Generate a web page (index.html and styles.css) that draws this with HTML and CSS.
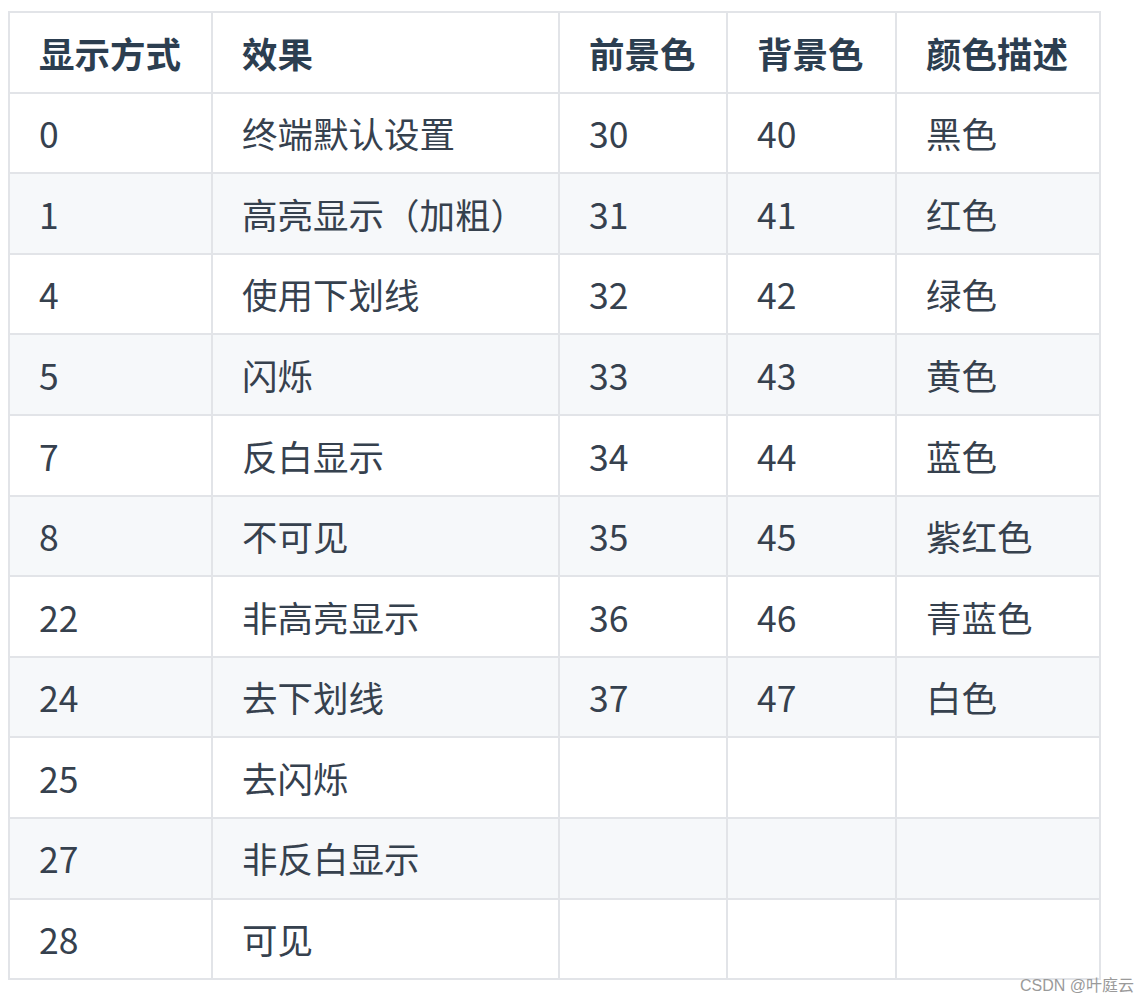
FILE: index.html
```html
<!DOCTYPE html>
<html lang="zh-CN">
<head>
<meta charset="utf-8">
<link rel="stylesheet" href="styles.css">
</head>
<body>
<div class="page">
<table class="codes">
  <colgroup>
    <col class="c1"><col class="c2"><col class="c3"><col class="c4"><col class="c5">
  </colgroup>
  <thead>
    <tr><th>显示方式</th><th>效果</th><th>前景色</th><th>背景色</th><th>颜色描述</th></tr>
  </thead>
  <tbody>
    <tr><td>0</td><td>终端默认设置</td><td>30</td><td>40</td><td>黑色</td></tr>
    <tr><td>1</td><td>高亮显示（加粗）</td><td>31</td><td>41</td><td>红色</td></tr>
    <tr><td>4</td><td>使用下划线</td><td>32</td><td>42</td><td>绿色</td></tr>
    <tr><td>5</td><td>闪烁</td><td>33</td><td>43</td><td>黄色</td></tr>
    <tr><td>7</td><td>反白显示</td><td>34</td><td>44</td><td>蓝色</td></tr>
    <tr><td>8</td><td>不可见</td><td>35</td><td>45</td><td>紫红色</td></tr>
    <tr><td>22</td><td>非高亮显示</td><td>36</td><td>46</td><td>青蓝色</td></tr>
    <tr><td>24</td><td>去下划线</td><td>37</td><td>47</td><td>白色</td></tr>
    <tr><td>25</td><td>去闪烁</td><td></td><td></td><td></td></tr>
    <tr><td>27</td><td>非反白显示</td><td></td><td></td><td></td></tr>
    <tr><td>28</td><td>可见</td><td></td><td></td><td></td></tr>
  </tbody>
</table>
<div class="mark">CSDN @叶庭云</div>
</div>
</body>
</html>
```
FILE: styles.css
```css
html, body {
  margin: 0;
  padding: 0;
  background: #ffffff;
}
.page {
  position: relative;
  width: 1148px;
  height: 1000px;
  padding: 11px 0 0 8px;
  box-sizing: border-box;
}
.codes {
  border-collapse: collapse;
  table-layout: fixed;
  width: 1091px;
  font-family: "Noto Sans CJK SC", "Noto Sans", sans-serif;
  font-size: 35.5px;
  color: #2c3e50;
}
.c1 { width: 203px; }
.c2 { width: 347px; }
.c3 { width: 168px; }
.c4 { width: 169px; }
.c5 { width: 204px; }
.codes th, .codes td {
  border: 2px solid #e2e4e8;
  height: 80.6px;
  box-sizing: border-box;
  padding: 0 0 0 29px;
  text-align: left;
  vertical-align: middle;
  line-height: 1;
  white-space: nowrap;
}
.codes th {
  font-weight: 700;
  color: #2c3e50;
}
.codes td {
  font-weight: 400;
  color: #36414e;
}
.codes tbody tr:nth-child(odd) td {
  background: #ffffff;
}
.codes tbody tr:nth-child(even) td {
  background: #f6f8fa;
}
.mark {
  position: absolute;
  right: 14px;
  top: 972px;
  font-family: "Liberation Sans", "Noto Sans CJK SC", sans-serif;
  font-size: 16px;
  color: #9a9a9a;
}
```
